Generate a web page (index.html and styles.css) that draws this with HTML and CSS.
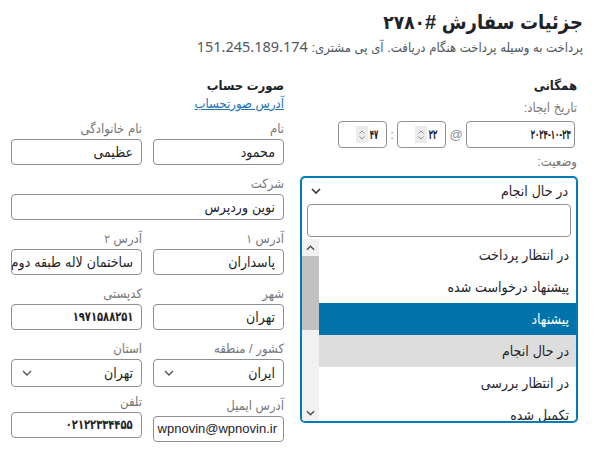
FILE: index.html
```html
<!DOCTYPE html>
<html lang="fa" dir="rtl">
<head>
<meta charset="utf-8">
<title>جزئیات سفارش</title>
<link rel="stylesheet" href="styles.css">
</head>
<body>
<div class="page">
  <header class="head">
    <h1 class="title">جزئیات سفارش #<span class="tnum" lang="en">۲۷۸۰</span></h1>
    <p class="sub">پرداخت به وسیله پرداخت هنگام دریافت. آی پی مشتری: <span class="ip">151.245.189.174</span></p>
  </header>
  <div class="cols">
    <section class="col general">
      <h3 class="col-title">همگانی</h3>
      <div class="lbl lbl-date">تاریخ ایجاد:</div>
      <div class="daterow">
        <div class="inp date"><span class="num" lang="en">۲۰۲۴-۱۰-۲۳</span></div>
        <span class="sep at">@</span>
        <div class="inp time">
          <span class="num" lang="en">۲۲</span>
          <span class="spin"><svg viewBox="0 0 10 14" width="10" height="14"><path d="M2.5 5.5 5 3l2.5 2.5M2.5 8.5 5 11l2.5-2.5" fill="none" stroke="#8c8f94" stroke-width="1"/></svg></span>
        </div>
        <span class="sep colon">:</span>
        <div class="inp time">
          <span class="num" lang="en">۴۷</span>
          <span class="spin"><svg viewBox="0 0 10 14" width="10" height="14"><path d="M2.5 5.5 5 3l2.5 2.5M2.5 8.5 5 11l2.5-2.5" fill="none" stroke="#8c8f94" stroke-width="1"/></svg></span>
        </div>
      </div>
      <div class="lbl lbl-status">وضعیت:</div>
      <div class="s2">
        <div class="s2-sel">
          <span>در حال انجام</span>
          <svg class="chev" viewBox="0 0 10 6" width="10" height="6"><path d="M1 1l4 4 4-4" fill="none" stroke="#2c3338" stroke-width="1.6"/></svg>
        </div>
        <div class="s2-search"><div class="search-box"></div></div>
        <div class="s2-results">
          <ul class="opts">
            <li>در انتظار پرداخت</li>
            <li>پیشنهاد درخواست شده</li>
            <li class="hl">پیشنهاد</li>
            <li class="sel">در حال انجام</li>
            <li>در انتظار بررسی</li>
            <li>تکمیل شده</li>
          </ul>
          <div class="sbar">
            <div class="sb-btn"><svg viewBox="0 0 10 6" width="9" height="6"><path d="M1 5l4-4 4 4" fill="none" stroke="#505050" stroke-width="1.6"/></svg></div>
            <div class="sb-track"><div class="sb-thumb"></div></div>
            <div class="sb-btn"><svg viewBox="0 0 10 6" width="9" height="6"><path d="M1 1l4 4 4-4" fill="none" stroke="#505050" stroke-width="1.6"/></svg></div>
          </div>
        </div>
      </div>
    </section>
    <section class="col billing">
      <h3 class="col-title">صورت حساب</h3>
      <a class="link" href="#">آدرس صورتحساب</a>
      <div class="grid">
        <div class="field"><div class="lbl">نام</div><div class="inp">محمود</div></div>
        <div class="field"><div class="lbl">نام خانوادگی</div><div class="inp">عظیمی</div></div>
        <div class="field wide"><div class="lbl">شرکت</div><div class="inp">نوین وردپرس</div></div>
        <div class="field"><div class="lbl">آدرس <span class="lnum" lang="en">۱</span></div><div class="inp">پاسداران</div></div>
        <div class="field"><div class="lbl">آدرس <span class="lnum" lang="en">۲</span></div><div class="inp">ساختمان لاله طبقه دوم</div></div>
        <div class="field"><div class="lbl">شهر</div><div class="inp">تهران</div></div>
        <div class="field"><div class="lbl">کدپستی</div><div class="inp"><span class="num wide-num" lang="en">۱۹۷۱۵۸۸۲۵۱</span></div></div>
        <div class="field"><div class="lbl">کشور / منطقه</div><div class="inp select"><span>ایران</span><svg class="chev" viewBox="0 0 10 6" width="10" height="6"><path d="M1 1l4 4 4-4" fill="none" stroke="#50575e" stroke-width="1.4"/></svg></div></div>
        <div class="field"><div class="lbl">استان</div><div class="inp select"><span>تهران</span><svg class="chev" viewBox="0 0 10 6" width="10" height="6"><path d="M1 1l4 4 4-4" fill="none" stroke="#50575e" stroke-width="1.4"/></svg></div></div>
        <div class="field f-email"><div class="lbl">آدرس ایمیل</div><div class="inp latin">wpnovin@wpnovin.ir</div></div>
        <div class="field f-phone"><div class="lbl">تلفن</div><div class="inp"><span class="num wide-num" lang="en">۰۲۱۲۲۳۳۴۴۵۵</span></div></div>
      </div>
    </section>
  </div>
</div>
</body>
</html>
```

FILE: styles.css
```css
* { box-sizing: border-box; }
html, body { margin: 0; padding: 0; background: #fff; }
body {
  font-family: "Liberation Sans", "DejaVu Sans Condensed", "DejaVu Sans", sans-serif;
  color: #1d2327;
  font-size: 13px;
}
.page {
  width: 595px;
  height: 451px;
  overflow: hidden;
  padding: 8px 12px 0 11px;
}
.head { text-align: right; }
.title {
  margin: 0;
  font-size: 20px;
  line-height: 28px;
  font-weight: bold;
  color: #1d2327;
}
.tnum {
  font-family: "DejaVu Sans Condensed", "DejaVu Sans", sans-serif;
  font-size: 19px;
}
.sub {
  margin: 0;
  font-size: 13px;
  line-height: 20px;
  color: #50575e;
}
.ip { font-family: "Noto Sans", "Liberation Sans", sans-serif; font-size: 14.5px; }
.cols {
  margin-top: 18px;
  display: flex;
  gap: 17px;
  padding-left: 0;
  padding-right: 6px;
}
.col { display: flex; flex-direction: column; }
.general { width: 276px; }
.billing { width: 273px; }
.col-title {
  margin: 0;
  font-size: 13px;
  line-height: 20px;
  font-weight: bold;
  color: #1d2327;
}
.link {
  color: #2271b1;
  text-decoration: underline;
  font-size: 13px;
  line-height: 16px;
  align-self: flex-start;
}
.lbl {
  color: #777;
  font-size: 13px;
  line-height: 20px;
  height: 20px;
  white-space: nowrap;
}
.lnum { font-family: "DejaVu Sans Condensed", "DejaVu Sans", sans-serif; font-size: 12px; }
.lbl-date { margin-top: 2px; }
.lbl-status { margin-top: 4px; }
.inp {
  height: 26px;
  border: 1px solid #8c8f94;
  border-radius: 4px;
  background: #fff;
  padding: 0 8px;
  font-size: 14px;
  line-height: 24px;
  color: #1d2327;
  white-space: nowrap;
  overflow: hidden;
  display: flex;
  align-items: center;
}
.num {
  display: inline-block;
  font-family: "DejaVu Sans Condensed", "DejaVu Sans", sans-serif;
  font-size: 13px;
  font-weight: bold;
  transform: scaleX(0.6);
  transform-origin: right center;
}
.num.wide-num { transform: scaleX(0.85); }
.latin { font-family: "Liberation Sans", sans-serif; font-size: 13px; padding: 0 6px; }
.select {
  height: 28px;
  justify-content: space-between;
  padding: 0 8px 0 10px;
}
.select .chev { flex: none; }
.daterow {
  margin-top: 3px;
  display: flex;
  align-items: center;
  height: 27px;
  padding-right: 2px;
}
.daterow .inp { height: 27px; }
.date { width: 109px; padding: 0 3px; }
.sep { color: #8c8f94; font-size: 13px; text-align: center; }
.at { width: 20px; }
.colon { width: 10px; }
.time {
  width: 49px;
  padding: 0 8px 0 0;
}
.time .num { flex: none; }
.spin {
  width: 12px;
  height: 17px;
  background: #ececec;
  display: flex;
  align-items: center;
  justify-content: center;
  flex: none;
  margin-right: -4px;
}
.s2 {
  margin-top: 5px;
  border: 1px solid #007cba;
  box-shadow: 0 0 0 1px #007cba;
  border-radius: 4px;
  background: #fff;
  overflow: hidden;
}
.s2-sel {
  height: 25px;
  display: flex;
  align-items: center;
  justify-content: space-between;
  padding: 0 8px 0 9px;
  font-size: 14px;
  color: #1d2327;
}
.s2-search { padding: 1px 5px 2px 5px; }
.search-box {
  height: 33px;
  border: 1px solid #8c8f94;
  border-radius: 4px;
}
.s2-results {
  display: flex;
  height: 182px;
  overflow: hidden;
}
.opts {
  list-style: none;
  margin: 0;
  padding: 0;
  flex: 1;
}
.opts li {
  height: 32px;
  line-height: 32px;
  padding: 0 7px;
  font-size: 14px;
  color: #1d2327;
  white-space: nowrap;
}
.opts li.hl { background: #0073aa; color: #fff; }
.opts li.sel { background: #ddd; }
.sbar {
  width: 17px;
  display: flex;
  flex-direction: column;
  background: #f1f1f1;
}
.sb-btn {
  height: 17px;
  display: flex;
  align-items: center;
  justify-content: center;
  flex: none;
}
.sb-track { flex: 1; }
.sb-thumb {
  margin-top: 0;
  height: 74px;
  background: #c1c1c1;
}
.grid {
  margin-top: 7px;
  display: grid;
  grid-template-columns: 131px 131px;
  column-gap: 11px;
  row-gap: 9px;
}
.field { display: flex; flex-direction: column; }
.wide { grid-column: 1 / span 2; }
.f-phone { margin-top: -4px; }
.f-email .inp { direction: ltr; justify-content: flex-end; }
```
